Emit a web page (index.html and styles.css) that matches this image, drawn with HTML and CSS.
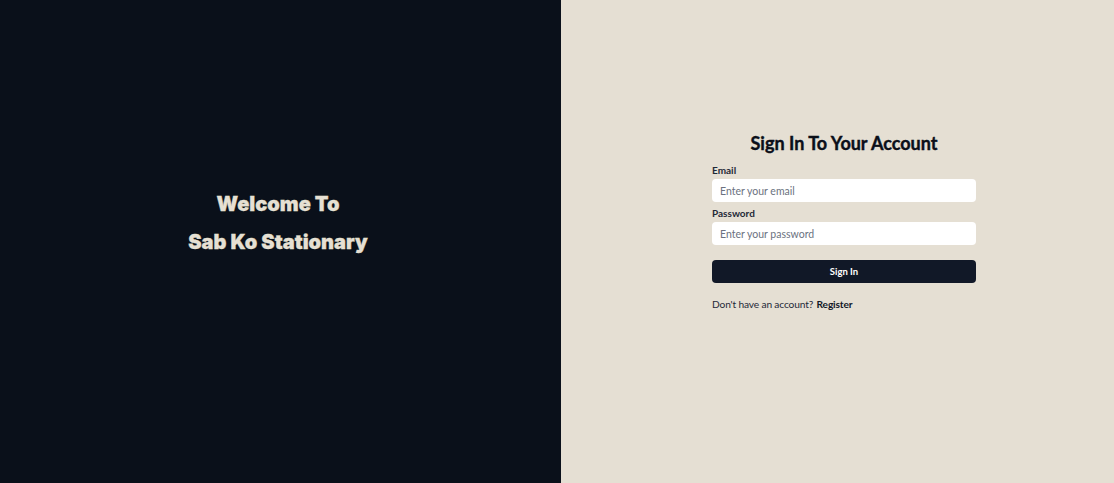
FILE: index.html
```html
<!DOCTYPE html>
<html lang="en">
<head>
<meta charset="utf-8">
<title>Sign In</title>
<link rel="stylesheet" href="styles.css">
</head>
<body>
<main class="page">
  <section class="hero">
    <h1 class="hero-title">Welcome To</h1>
    <h1 class="hero-title">Sab Ko Stationary</h1>
  </section>
  <section class="auth">
    <form class="form">
      <h2 class="form-title">Sign In To Your Account</h2>
      <label class="label" for="email">Email</label>
      <input class="input" id="email" type="email" placeholder="Enter your email">
      <label class="label label-second" for="password">Password</label>
      <input class="input" id="password" type="password" placeholder="Enter your password">
      <button class="btn" type="button">Sign In</button>
      <p class="note">Don't have an account? <a class="link" href="#">Register</a></p>
    </form>
  </section>
</main>
</body>
</html>
```
FILE: styles.css
```css
* { box-sizing: border-box; }
html, body { margin: 0; height: 100%; }
body { font-family: Lato, "Open Sans", sans-serif; }
.page {
  display: grid;
  grid-template-columns: 561px 1fr;
  height: 483px;
}
.hero {
  background: #0a101a;
  display: flex;
  flex-direction: column;
  align-items: center;
  justify-content: center;
  gap: 14px;
  padding-bottom: 37px;
  padding-right: 5px;
}
.hero-title {
  margin: 0;
  color: #e6e0d3;
  font-family: Inter, Lato, sans-serif;
  font-size: 20px;
  font-weight: 900;
  line-height: 24px;
  -webkit-text-stroke: 0.3px #e6e0d3;
}
.auth {
  background: #e5dfd3;
  display: flex;
  justify-content: center;
  padding-left: 13px;
  padding-top: 131px;
}
.form {
  width: 264px;
  display: flex;
  flex-direction: column;
}
.form-title {
  margin: 0 0 9px;
  text-align: center;
  font-size: 18px;
  font-weight: 700;
  color: #0b0f19;
  line-height: 24px;
  -webkit-text-stroke: 0.4px #0b0f19;
}
.label {
  font-size: 10px;
  font-weight: 700;
  color: #1f2937;
  line-height: 12px;
  margin-bottom: 3px;
}
.label-second { margin-top: 5px; }
.input {
  height: 23px;
  border: none;
  border-radius: 4px;
  background: #fff;
  padding: 0 8px;
  font-family: inherit;
  font-size: 10.5px;
  color: #111827;
}
.input::placeholder { color: #6b7280; }
.btn {
  margin-top: 15px;
  height: 23px;
  border: none;
  border-radius: 4px;
  background: #111827;
  color: #fff;
  font-family: inherit;
  font-size: 9.5px;
  font-weight: 700;
}
.note {
  margin: 14px 0 0;
  font-size: 10.2px;
  line-height: 14px;
  letter-spacing: -0.15px;
  color: #1f2937;
}
.link {
  color: #111827;
  text-decoration: none;
  font-weight: 700;
  margin-left: 1px;
}
```
